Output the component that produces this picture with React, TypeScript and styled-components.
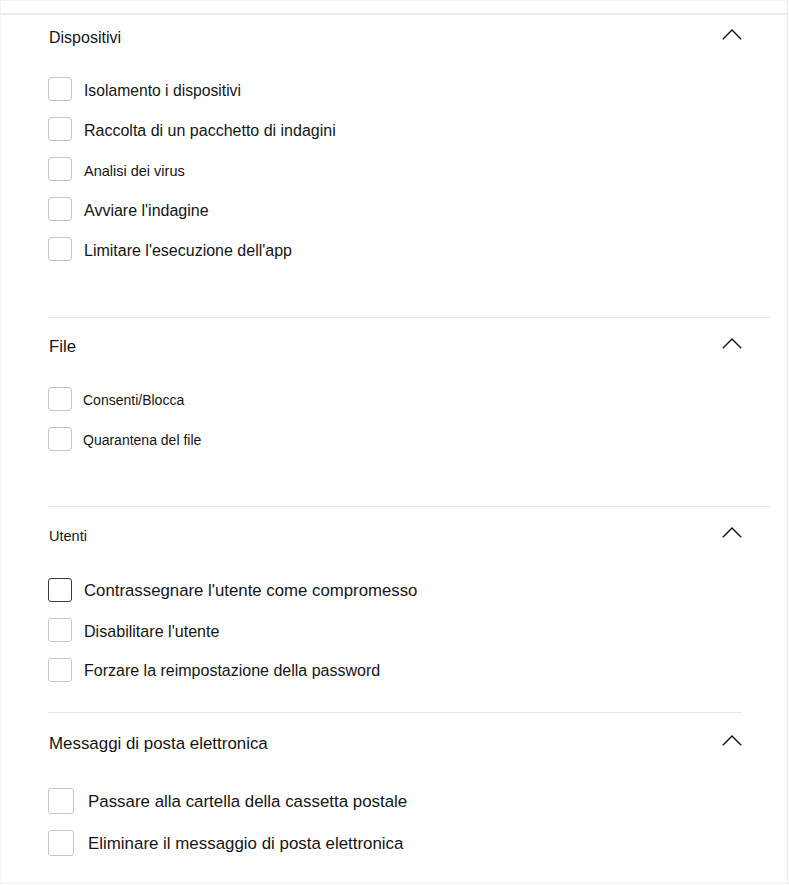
import React from "react";
import styled, { createGlobalStyle } from "styled-components";

const Global = createGlobalStyle`
  html, body { margin: 0; padding: 0; background: #ffffff; }
  body { font-family: "Liberation Sans", Arial, sans-serif; color: #161514; }
`;

const Frame = styled.div`
  width: 786px;
  border-left: 1px solid #f2f2f2;
  border-right: 1px solid #ebebeb;
  border-bottom: 1px solid #efefef;
  background: #fff;
`;

const TopBar = styled.div`
  height: 12px;
  border-top: 1px solid #f4f4f4;
  border-bottom: 2px solid #ebebeb;
`;

const Section = styled.section<{ $divider: boolean; $end: number; $pt: number; $pb: number }>`
  margin-left: 47px;
  width: ${(p) => p.$end - 48}px;
  border-top: ${(p) => (p.$divider ? "1px solid #e9e9e9" : "0")};
  padding-top: ${(p) => p.$pt}px;
  padding-bottom: ${(p) => p.$pb}px;
`;

const Header = styled.div<{ $right: number }>`
  height: 46px;
  display: flex;
  align-items: center;
  justify-content: space-between;
  padding-left: 1px;
  padding-right: ${(p) => p.$right}px;
`;

const Title = styled.h3<{ $size: number }>`
  margin: 0;
  font-weight: 400;
  font-size: ${(p) => p.$size}px;
  line-height: 20px;
  color: #161514;
`;

const Chevron = styled.svg`
  width: 20px;
  height: 11px;
  margin-bottom: 7px;
  display: block;
`;

const List = styled.ul<{ $mt: number; $gap: number }>`
  list-style: none;
  margin: ${(p) => p.$mt}px 0 0 0;
  padding: 0;
  display: flex;
  flex-direction: column;
  gap: ${(p) => p.$gap}px;
`;

const Row = styled.li<{ $gap: number }>`
  display: flex;
  align-items: center;
  gap: ${(p) => p.$gap}px;
`;

const Box = styled.span<{ $size: number; $dark?: boolean }>`
  box-sizing: border-box;
  width: ${(p) => p.$size}px;
  height: ${(p) => p.$size}px;
  flex: none;
  border-style: solid;
  border-color: ${(p) => (p.$dark ? "#3b3a39" : "#c8c6c4")};
  border-width: ${(p) => (p.$dark ? "1.5px" : "1px")};
  border-radius: 3px;
  background: #fff;
`;

const Label = styled.span<{ $size: number; $drop: number }>`
  font-size: ${(p) => p.$size}px;
  line-height: 20px;
  padding-top: ${(p) => p.$drop * 2}px;
  color: #161514;
  white-space: nowrap;
`;

type Item = { text: string; size: number; dark?: boolean };
type Group = {
  title: string;
  titleSize: number;
  divider: boolean;
  end: number;
  pt: number;
  pb: number;
  mt: number;
  box: number;
  gap: number;
  labelGap: number;
  drop: number;
  items: Item[];
};

const groups: Group[] = [
  {
    title: "Dispositivi",
    titleSize: 16,
    divider: false,
    end: 770,
    pt: 0,
    pb: 56,
    mt: 16,
    box: 24,
    gap: 16,
    labelGap: 12,
    drop: 2,
    items: [
      { text: "Isolamento i dispositivi", size: 15.7 },
      { text: "Raccolta di un pacchetto di indagini", size: 16 },
      { text: "Analisi dei virus", size: 14.5 },
      { text: "Avviare l'indagine", size: 16 },
      { text: "Limitare l'esecuzione dell'app", size: 16 },
    ],
  },
  {
    title: "File",
    titleSize: 16.8,
    divider: true,
    end: 770,
    pt: 6,
    pb: 55,
    mt: 17,
    box: 24,
    gap: 16,
    labelGap: 11,
    drop: 1,
    items: [
      { text: "Consenti/Blocca", size: 14 },
      { text: "Quarantena del file", size: 14 },
    ],
  },
  {
    title: "Utenti",
    titleSize: 14.5,
    divider: true,
    end: 770,
    pt: 6,
    pb: 30,
    mt: 19,
    box: 24,
    gap: 16,
    labelGap: 12,
    drop: 1,
    items: [
      { text: "Contrassegnare l'utente come compromesso", size: 16.8, dark: true },
      { text: "Disabilitare l'utente", size: 16.1 },
      { text: "Forzare la reimpostazione della password", size: 16 },
    ],
  },
  {
    title: "Messaggi di posta elettronica",
    titleSize: 16.9,
    divider: true,
    end: 742,
    pt: 8,
    pb: 27,
    mt: 21,
    box: 26,
    gap: 16,
    labelGap: 14,
    drop: 1,
    items: [
      { text: "Passare alla cartella della cassetta postale", size: 16.9 },
      { text: "Eliminare il messaggio di posta elettronica", size: 16.9 },
    ],
  },
];

const ChevronUp = () => (
  <Chevron viewBox="0 0 20 11" fill="none">
    <polyline points="0.8,10.2 10,1 19.2,10.2" stroke="#161514" strokeWidth="1.4" />
  </Chevron>
);

export default function App() {
  return (
    <>
      <Global />
      <Frame>
        <TopBar />
        {groups.map((g) => (
          <Section key={g.title} $divider={g.divider} $end={g.end} $pt={g.pt} $pb={g.pb}>
            <Header $right={g.end === 742 ? 0 : 28}>
              <Title $size={g.titleSize}>{g.title}</Title>
              <ChevronUp />
            </Header>
            <List $mt={g.mt} $gap={g.gap}>
              {g.items.map((it) => (
                <Row key={it.text} $gap={g.labelGap}>
                  <Box $size={g.box} $dark={it.dark} />
                  <Label $size={it.size} $drop={g.drop}>
                    {it.text}
                  </Label>
                </Row>
              ))}
            </List>
          </Section>
        ))}
      </Frame>
    </>
  );
}
